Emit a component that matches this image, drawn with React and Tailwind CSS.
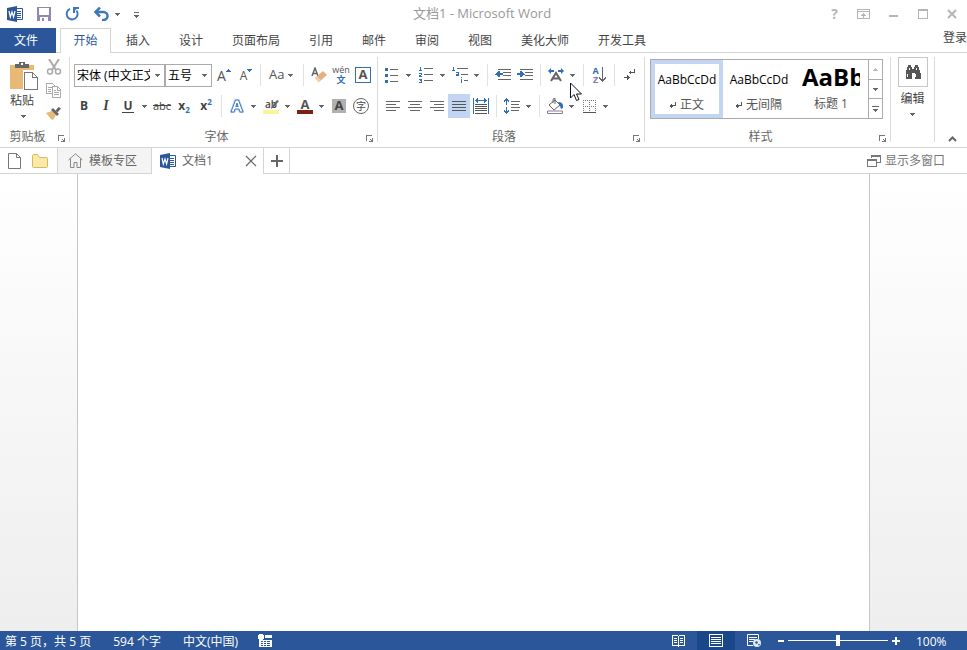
import { useState } from "react";

const TABS = ["插入", "设计", "页面布局", "引用", "邮件", "审阅", "视图", "美化大师", "开发工具"];

function Svg({ w = 16, h = 16, children, crisp = true }) {
  return (
    <svg
      width={w}
      height={h}
      viewBox={`0 0 ${w} ${h}`}
      fill="none"
      className="shrink-0"
      shapeRendering={crisp ? "crispEdges" : "auto"}
      aria-hidden="true"
    >
      {children}
    </svg>
  );
}

function Caret({ color = "#666" }) {
  return (
    <Svg w={5} h={3}>
      <path d="M0 0h5v1H4v1H3v1H2V2H1V1H0z" fill={color} />
    </Svg>
  );
}

function Tool({ label, active, children }) {
  return (
    <button
      type="button"
      aria-label={label}
      className={`flex w-[22px] shrink-0 items-center justify-center self-stretch ${active ? "bg-[#c2d5f2]" : ""}`}
    >
      {children}
    </button>
  );
}

function SplitTool({ label, children }) {
  return (
    <button type="button" aria-label={label} className="flex h-6 shrink-0 items-center">
      <span className="flex w-[22px] items-center justify-center">{children}</span>
      <span className="flex w-3 justify-center pr-0.5">
        <Caret />
      </span>
    </button>
  );
}

function Sep() {
  return <span className="mx-1 h-[22px] w-px shrink-0 bg-[#e1e1e1]" />;
}

function Group({ title, className = "", children }) {
  return (
    <section aria-label={title} className={`flex shrink-0 flex-col border-r border-[#dadada] ${className}`}>
      {children}
      <div className="mt-auto -mb-px flex h-3 items-end">
        <span className="flex-1 text-center leading-3 text-[#666]">{title}</span>
        <button type="button" aria-label={`${title}设置`} className="flex w-3.5 justify-center">
          <Svg w={8} h={8}>
            <path d="M0 6V0h6v1H1v5zM7 3v4H3V6h2V5H4V4h1v1h1V3z" fill="#777" />
          </Svg>
        </button>
      </div>
    </section>
  );
}

function WordIcon() {
  return (
    <Svg w={16} h={16} crisp={false}>
      <path d="M9 2.5h6.5v11H9" fill="#fff" stroke="#2b579a" />
      <path d="M10 5.500h4M10 7.500h4M10 9.500h4M10 11.500h4" stroke="#2b579a" />
      <path d="M0 2l10-2v16L0 14z" fill="#2b579a" />
      <path d="M2 5l1.3 6L5 6l1.6 5L8 5" stroke="#fff" strokeWidth="1.2" />
    </Svg>
  );
}

// rows: [x, y, width] of each stroke in a paragraph glyph
function Lines({ rows, color = "#666" }) {
  return rows.map(([x, y, w]) => <rect key={`${x}-${y}`} x={x} y={y} width={w} height="1" fill={color} />);
}

function TitleBar() {
  return (
    <header className="flex h-7 items-center pl-[7px] text-[#999]">
      <div className="flex flex-1 items-center">
        <WordIcon />
        <button type="button" aria-label="保存" className="ml-3.5">
          <Svg w={14} h={14}>
            <path d="M0 0h14v14H0z" fill="#9186b4" />
            <path d="M2 1h10v7H2zM3 10h8v4H3z" fill="#fff" />
            <path d="M5 11h2v3H5z" fill="#9186b4" />
          </Svg>
        </button>
        <button type="button" aria-label="重复" className="ml-3.5">
          <Svg w={15} h={14} crisp={false}>
            <path d="M5 1.8A5.5 5.5 0 1 0 11.5 3.5" stroke="#3f78b8" strokeWidth="2" />
            <path d="M8 0h6v2h-2.500L10 3.500V6H8z" fill="#3f78b8" />
          </Svg>
        </button>
        <button type="button" aria-label="撤消" className="ml-3.5 flex items-center gap-1.5">
          <Svg w={15} h={14} crisp={false}>
            <path d="M2 5h7.500a4 4 0 0 1 0 8H8" stroke="#3f78b8" strokeWidth="2.500" />
            <path d="M6 .5L1.500 5 6 9.500" stroke="#3f78b8" strokeWidth="2.500" />
          </Svg>
          <Caret />
        </button>
        <button type="button" aria-label="自定义快速访问工具栏" className="ml-3.5 pt-0.5">
          <Svg w={5} h={6}>
            <path d="M0 0h5v1H0zM0 3h5v1H4v1H3v1H2V5H1V4H0z" fill="#666" />
          </Svg>
        </button>
      </div>
      <h1 className="text-[13px] font-normal">文档1 - Microsoft Word</h1>
      <div className="flex flex-1 items-center justify-end gap-[19px] pr-2.5">
        <button type="button" aria-label="帮助" className="text-sm leading-4 font-bold text-[#b5b5b5]">
          ?
        </button>
        <button type="button" aria-label="功能区显示选项">
          <Svg w={13} h={10}>
            <path d="M.5.5h12v9H.5zM0 2.500h13M6.500 4v5M4 6.500h5M5 5.500h3" stroke="#b5b5b5" />
          </Svg>
        </button>
        <button type="button" aria-label="最小化">
          <Svg w={10} h={10}>
            <path d="M0 6h9v2H0z" fill="#b5b5b5" />
          </Svg>
        </button>
        <button type="button" aria-label="最大化">
          <Svg w={10} h={10}>
            <path d="M.5.5h9v9H.5zM0 1.500h10" stroke="#b5b5b5" />
          </Svg>
        </button>
        <button type="button" aria-label="关闭">
          <Svg w={10} h={10} crisp={false}>
            <path d="M1 1l8 8M9 1L1 9" stroke="#b5b5b5" strokeWidth="2" />
          </Svg>
        </button>
      </div>
    </header>
  );
}

function RibbonTabs() {
  return (
    <nav className="flex h-[25px] text-[#444]">
      <button type="button" className="w-14 bg-[#2b579a] pr-1 text-white">
        文件
      </button>
      <span className="w-1 border-b border-[#d4d4d4]" />
      <button type="button" aria-current="page" className="w-[51px] border border-b-0 border-[#d4d4d4] text-[#2b579a]">
        开始
      </button>
      {TABS.map((tab) => (
        <button
          key={tab}
          type="button"
          className={`border-b border-[#d4d4d4] pt-px pl-px ${tab.length > 2 ? "w-[77px]" : "w-[53px]"}`}
        >
          {tab}
        </button>
      ))}
      <button type="button" className="flex-1 border-b border-[#d4d4d4] pb-1 text-right">
        登录
      </button>
    </nav>
  );
}

function ClipboardGroup() {
  return (
    <Group title="剪贴板" className="w-[70px]">
      <div className="flex pl-2.5">
        <button type="button" className="flex w-7 flex-col items-start pt-1 text-[#444]">
          <Svg w={28} h={30}>
            <path d="M0 4h24v24H0z" fill="#e8b877" />
            <path d="M5 3h4V1h6v2h4v4H5z" fill="#666" />
            <path d="M11 2h2v2h-2z" fill="#fff" />
            <path d="M13 9h15v21H13z" fill="#fff" />
            <path d="M14.500 11.500h8l5 5v12h-13zM22.500 11.500v5h5" fill="#fff" stroke="#777" />
          </Svg>
          <span className="leading-5">粘贴</span>
          <span className="flex w-[26px] justify-center pt-1">
            <Caret />
          </span>
        </button>
        <div className="flex flex-col gap-2 pt-0.5 pl-2">
          <button type="button" aria-label="剪切">
            <Svg w={16} h={16} crisp={false}>
              <path d="M3 0l7 11M13 0L6 11" stroke="#aaa" strokeWidth="2" />
              <circle cx="4" cy="12.500" r="2.500" stroke="#aaa" strokeWidth="1.500" />
              <circle cx="12" cy="12.500" r="2.500" stroke="#aaa" strokeWidth="1.500" />
            </Svg>
          </button>
          <button type="button" aria-label="复制">
            <Svg w={16} h={15}>
              <path d="M.5.5h6l2 2v8h-8zM2 4.500h4M2 6.500h3M2 8.500h3" stroke="#aaa" />
              <path d="M6.500 3.500h5l3 3v8h-8z" fill="#fff" stroke="#aaa" />
              <path d="M11.500 4v3H15M8 7.500h2M8 9.500h5M8 11.500h5" stroke="#aaa" />
            </Svg>
          </button>
          <button type="button" aria-label="格式刷">
            <Svg w={16} h={14} crisp={false}>
              <path d="M0 7l6-2 4 4-3 5-2-1z" fill="#e8b877" />
              <path d="M5 4l2-2 6 6-2 2z" fill="#666" />
              <path d="M9.500 4.500l3-3.500L15 2.500 11.500 6.500z" fill="#666" />
            </Svg>
          </button>
        </div>
      </div>
    </Group>
  );
}

function Combo({ label, value, className }) {
  return (
    <label className={`relative block h-[23px] shrink-0 ${className}`}>
      <select
        aria-label={label}
        defaultValue={value}
        className="h-full w-full appearance-none overflow-hidden border border-[#ababab] bg-white pt-0.5 pr-3.5 pl-0.5 text-xs text-black"
      >
        <option>{value}</option>
      </select>
      <span className="pointer-events-none absolute top-2.5 right-[5px]">
        <Caret />
      </span>
    </label>
  );
}

function FontGroup() {
  return (
    <Group title="字体" className="w-[308px]">
      <div className="mt-1.5 flex h-6 items-center pl-1 text-[#555]">
        <Combo label="字体" value="宋体 (中文正文)" className="w-[91px]" />
        <Combo label="字号" value="五号" className="w-[47px]" />
        <Tool label="增大字号">
          <span className="pt-0.5 pl-0.5 text-sm leading-4 font-medium">A</span>
          <span className="self-start pt-1.5">
            <Svg w={5} h={3}>
              <path d="M2 0h1v1h1v1h1v1H0V2h1V1h1z" fill="#2f6fb5" />
            </Svg>
          </span>
        </Tool>
        <Tool label="减小字号">
          <span className="pt-0.5 pl-0.5 text-xs leading-4 font-medium">A</span>
          <span className="self-start pt-1.5">
            <Caret color="#2f6fb5" />
          </span>
        </Tool>
        <Sep />
        <button type="button" aria-label="更改大小写" className="flex h-6 w-[34px] items-center gap-1 pl-1">
          <span className="text-[13px] font-medium">Aa</span>
          <Caret />
        </button>
        <Sep />
        <Tool label="清除格式">
          <Svg w={16} h={16} crisp={false}>
            <path d="M1 9l3-8 3 8M2 6.500h4" stroke="#666" strokeWidth="1.500" />
            <path d="M4 11l8-7 4 4-8 7z" fill="#e3b083" />
            <path d="M4 11l2-1.800 4 4L8 15H7z" fill="#f0cfae" />
          </Svg>
        </Tool>
        <Tool label="拼音指南">
          <span className="flex flex-col items-center">
            <span className="h-[9px] text-[9px] leading-[7px] font-medium">wén</span>
            <span className="h-[9px] font-['Noto_Sans_CJK_SC',sans-serif] text-[9px] leading-[9px] font-bold text-[#2f6fb5]">
              文
            </span>
          </span>
        </Tool>
        <Tool label="字符边框">
          <span className="flex size-4 items-center justify-center border border-[#2f6fb5] text-[13px] font-bold">A</span>
        </Tool>
      </div>
      <div className="mt-[7px] flex h-6 items-center pl-[3px] text-[#444]">
        <Tool label="加粗">
          <b>B</b>
        </Tool>
        <Tool label="倾斜">
          <i className="font-['Liberation_Serif',serif] text-sm font-bold">I</i>
        </Tool>
        <SplitTool label="下划线">
          <span className="border-b border-[#444] px-px leading-3 font-bold">U</span>
        </SplitTool>
        <Tool label="删除线">
          <span className="text-[11px] font-medium line-through">abc</span>
        </Tool>
        <Tool label="下标">
          <b>x</b>
          <span className="pt-2 text-[8px] leading-3 font-bold text-[#2f6fb5]">2</span>
        </Tool>
        <Tool label="上标">
          <b>x</b>
          <span className="pb-2 text-[8px] leading-3 font-bold text-[#2f6fb5]">2</span>
        </Tool>
        <Sep />
        <SplitTool label="文本效果">
          <Svg w={14} h={14} crisp={false}>
            <path d="M1 13L5.500 1h3L13 13h-3l-1-3H5l-1 3zM5.800 7.500h2.400L7 4z" stroke="#c2d5f2" strokeWidth="2.500" />
            <path d="M1 13L5.500 1h3L13 13h-3l-1-3H5l-1 3zM5.800 7.500h2.400L7 4z" fill="#fff" stroke="#3f78b8" />
          </Svg>
        </SplitTool>
        <SplitTool label="突出显示">
          <span className="relative flex flex-col">
            <span className="text-[10px] leading-[11px] font-semibold">ab</span>
            <span className="h-1 w-4 bg-[#fdf39a]" />
            <span className="absolute top-0 right-0">
              <Svg w={9} h={11} crisp={false}>
                <path d="M1 10l1-3 5-6 2 1-5 6z" fill="#666" />
              </Svg>
            </span>
          </span>
        </SplitTool>
        <SplitTool label="字体颜色">
          <span className="flex flex-col items-center">
            <span className="text-[13px] leading-[11px] font-bold text-[#555]">A</span>
            <span className="h-1 w-4 bg-[#7b2111]" />
          </span>
        </SplitTool>
        <Tool label="字符底纹">
          <span className="flex size-3.5 items-center justify-center bg-[#b1b1b1] text-[13px] font-bold">A</span>
        </Tool>
        <Tool label="带圈字符">
          <span className="flex size-4 shrink-0 items-center justify-center rounded-full border border-[#666] text-[10px] leading-none">
            字
          </span>
        </Tool>
      </div>
    </Group>
  );
}

function ParagraphGroup() {
  return (
    <Group title="段落" className="w-[267px]">
      <div className="mt-1.5 flex h-6 items-center pl-[3px]">
        <SplitTool label="项目符号">
          <Svg w={14} h={15}>
            <path d="M0 0h3v3H0zM0 6h3v3H0zM0 12h3v3H0z" fill="#2f6fb5" />
            <Lines rows={[[5, 1, 8], [5, 7, 8], [5, 13, 8]]} />
          </Svg>
        </SplitTool>
        <SplitTool label="编号">
          <Svg w={14} h={16}>
            <path d="M1 0h1v3h1v1H0V3h1V1H0zM0 6h3v2H2v1h1v1H0V8h2V7H0zM0 12h3v4H0v-1h2v-1H1v-1H0z" fill="#2f6fb5" />
            <Lines rows={[[5, 1, 9], [5, 7, 9], [5, 13, 9]]} />
          </Svg>
        </SplitTool>
        <SplitTool label="多级列表">
          <Svg w={16} h={16}>
            <path d="M1 0h1v3h1v1H0V3h1V1H0zM4 5h3v4H4V7h2V6H4zM9 10h1v1H9zM9 12h1v4H9z" fill="#2f6fb5" />
            <Lines rows={[[5, 1, 11], [9, 7, 7], [12, 13, 4]]} />
          </Svg>
        </SplitTool>
        <Sep />
        <Tool label="减少缩进">
          <Svg w={16} h={12}>
            <Lines rows={[[3, 0, 13], [8, 3, 8], [8, 6, 8], [3, 10, 13]]} />
            <path d="M0 5h1V4h1V3h1V2h2v2h3v2H5v2H3V7H2V6H0z" fill="#2f6fb5" />
          </Svg>
        </Tool>
        <Tool label="增加缩进">
          <Svg w={16} h={12}>
            <Lines rows={[[3, 0, 13], [8, 3, 8], [8, 6, 8], [3, 10, 13]]} />
            <path d="M8 5H7V4H6V3H5V2H3v2H0v2h3v2h2V7h1V6h2z" fill="#2f6fb5" />
          </Svg>
        </Tool>
        <Sep />
        <SplitTool label="中文版式">
          <Svg w={16} h={14} crisp={false}>
            <path d="M3 13l5-8 5 8M5 10.500h6" stroke="#666" strokeWidth="2" />
            <path d="M0 3l3-3v2h3v2H3v2zM16 3l-3-3v2h-3v2h3v2z" fill="#2f6fb5" />
          </Svg>
        </SplitTool>
        <Sep />
        <Tool label="排序">
          <span className="flex flex-col text-[9px] leading-[9px] font-bold">
            <span className="h-[9px] text-[#2f6fb5]">A</span>
            <span className="h-[9px] text-[#8a78ad]">Z</span>
          </span>
          <Svg w={7} h={16}>
            <path d="M3 0h1v12h1v-1h1v-1h1v2H6v1H5v1H4v1H3v-1H2v-1H1v-1H0v-2h1v1h1v1h1z" fill="#666" />
          </Svg>
        </Tool>
        <Sep />
        <Tool label="显示编辑标记">
          <Svg w={12} h={12}>
            <path d="M10 0h1v4H7v1H6V4H5V3h1V2h1v1h3zM0 8h3V6h1v1h1v1h1v1H5v1H4v1H3V9H0z" fill="#555" />
          </Svg>
        </Tool>
      </div>
      <div className="mt-[7px] flex h-6 items-center pl-1">
        <Tool label="左对齐">
          <Svg w={14} h={10}>
            <Lines rows={[[0, 0, 14], [0, 3, 10], [0, 6, 14], [0, 9, 10]]} />
          </Svg>
        </Tool>
        <Tool label="居中">
          <Svg w={14} h={10}>
            <Lines rows={[[0, 0, 14], [2, 3, 10], [0, 6, 14], [2, 9, 10]]} />
          </Svg>
        </Tool>
        <Tool label="右对齐">
          <Svg w={14} h={10}>
            <Lines rows={[[0, 0, 14], [4, 3, 10], [0, 6, 14], [4, 9, 10]]} />
          </Svg>
        </Tool>
        <Tool label="两端对齐" active>
          <Svg w={14} h={10}>
            <Lines rows={[[0, 0, 14], [0, 3, 14], [0, 6, 14], [0, 9, 14]]} color="#555" />
          </Svg>
        </Tool>
        <Tool label="分散对齐">
          <Svg w={16} h={16}>
            <path d="M0 0h1v16H0zM15 0h1v16h-1zM2 2h1V1h1V0h1v2h6V0h1v1h1v1h1v1h-1v1h-1v1h-1V3H5v2H4V4H3V3H2z" fill="#2f6fb5" />
            <Lines rows={[[2, 6, 12], [2, 8, 12], [2, 10, 12], [2, 12, 12], [2, 15, 12]]} color="#555" />
          </Svg>
        </Tool>
        <Sep />
        <SplitTool label="行距">
          <Svg w={16} h={16}>
            <path d="M2 0h1v1h1v1h1v2H4V3H3v4H2V3H1v1H0V2h1V1h1zM2 16h1v-1h1v-1h1v-2H4v1H3V9H2v4H1v-1H0v2h1v1h1z" fill="#2f6fb5" />
            <Lines rows={[[7, 3, 9], [7, 6, 8], [7, 9, 9], [7, 12, 8]]} />
          </Svg>
        </SplitTool>
        <Sep />
        <SplitTool label="底纹">
          <Svg w={16} h={16} crisp={false}>
            <path d="M2 7l6-5 5 5-6 5z" fill="#fff" stroke="#666" />
            <path d="M6 5V2q0-2 2-1.500V6" stroke="#666" />
            <path d="M11 4q5 0 5 4v2l-2 1-1-3z" fill="#2f6fb5" />
            <path d="M.5 13h15v2.500H.5z" fill="#fff" stroke="#8b7ba0" />
          </Svg>
        </SplitTool>
        <SplitTool label="边框">
          <Svg w={13} h={13}>
            <path d="M0 .5h13M0 6.500h13M.5 0v12M6.500 0v12M12.500 0v12" stroke="#777" strokeDasharray="1 1" />
            <path d="M0 12.500h13" stroke="#555" />
          </Svg>
        </SplitTool>
      </div>
    </Group>
  );
}

function StyleCard({ name, mark, selected, heading, onClick }) {
  return (
    <button
      type="button"
      onClick={onClick}
      className={`flex h-[58px] w-[72px] shrink-0 flex-col items-center overflow-hidden border-4 ${selected ? "border-[#c2d5f2]" : "border-transparent"}`}
    >
      {heading ? (
        <span className="w-[58px] overflow-hidden text-left text-2xl leading-[26px] font-bold whitespace-nowrap text-black">
          AaBb
        </span>
      ) : (
        <span className="leading-[31px] text-black">AaBbCcDd</span>
      )}
      <span className="mt-auto flex items-center gap-1 leading-5 text-[#555]">
        {mark && (
          <Svg w={6} h={6}>
            <path d="M5 0h1v4H3v1H2v1H1V5H0V3h1V2h1v1h3z" fill="#555" />
          </Svg>
        )}
        {name}
      </span>
    </button>
  );
}

function StylesGroup() {
  const [picked, setPicked] = useState("正文");
  return (
    <Group title="样式" className="w-[246px]">
      <div className="mt-0.5 ml-[5px] flex h-[60px] w-[233px] border border-[#ababab]">
        <StyleCard name="正文" mark selected={picked === "正文"} onClick={() => setPicked("正文")} />
        <StyleCard name="无间隔" mark selected={picked === "无间隔"} onClick={() => setPicked("无间隔")} />
        <StyleCard name="标题 1" heading selected={picked === "标题 1"} onClick={() => setPicked("标题 1")} />
        <div className="ml-auto flex w-3.5 flex-col divide-y divide-[#ababab] border-l border-[#ababab]">
          <button type="button" aria-label="上一行" className="flex flex-1 items-center justify-center">
            <Svg w={5} h={3}>
              <path d="M2 0h1v1h1v1h1v1H0V2h1V1h1z" fill="#bbb" />
            </Svg>
          </button>
          <button type="button" aria-label="下一行" className="flex flex-1 items-center justify-center">
            <Caret />
          </button>
          <button type="button" aria-label="其他样式" className="flex flex-1 items-center justify-center">
            <Svg w={7} h={6}>
              <path d="M0 0h7v1H0zM1 3h5v1H5v1H4v1H3V5H2V4H1z" fill="#666" />
            </Svg>
          </button>
        </div>
      </div>
    </Group>
  );
}

function Ribbon() {
  return (
    <div className="flex h-[95px] shrink-0 border-b border-[#d4d4d4] pt-1 pb-[5px]">
      <ClipboardGroup />
      <FontGroup />
      <ParagraphGroup />
      <StylesGroup />
      <div className="flex w-11 shrink-0 flex-col items-center border-r border-[#dadada]">
        <button type="button" className="flex flex-col items-center text-[#444]">
          <span className="flex h-[30px] w-[30px] items-center justify-center border border-[#c6c6c6]">
            <Svg w={16} h={14}>
              <path d="M3 0h3v2h1v2h2V2h1V0h3v2h1v3h1v3h1v6h-6V8H7v6H1V8h0V5h1V2h1z" fill="#555" />
              <path d="M2 9h1v3H2zM10 9h1v3h-1zM4 3h1v2H4zM11 3h1v2h-1z" fill="#fff" />
            </Svg>
          </span>
          <span className="mt-0.5 leading-5">编辑</span>
          <span className="pt-1">
            <Caret />
          </span>
        </button>
      </div>
      <button type="button" aria-label="折叠功能区" className="ml-auto self-end pr-2.5">
        <Svg w={9} h={6} crisp={false}>
          <path d="M1 5l3.500-3.500L8 5" stroke="#666" strokeWidth="2" />
        </Svg>
      </button>
    </div>
  );
}

function DocumentTabs() {
  return (
    <div className="flex h-[26px] shrink-0 text-[#666]">
      <div className="flex w-[58px] items-center gap-2.5 border-r border-b border-[#d4d4d4] pl-2">
        <button type="button" aria-label="新建">
          <Svg w={14} h={16} crisp={false}>
            <path d="M.5.5h8l4 4v11H.5zM8.500.5v4h4" fill="#fff" stroke="#777" />
          </Svg>
        </button>
        <button type="button" aria-label="打开">
          <Svg w={16} h={14} crisp={false}>
            <path d="M.5 12.500v-11q0-1 1-1h4l2 3h7q1 0 1 1v8q0 1-1 1h-13q-1 0-1-1z" fill="#fbe9a9" stroke="#d9b860" />
          </Svg>
        </button>
      </div>
      <button type="button" className="flex w-[94px] items-center gap-1.5 border-r border-b border-[#d4d4d4] bg-[#f4f4f4] pl-2.5">
        <Svg w={15} h={15} crisp={false}>
          <path d="M.5 7L7.500.8 14.500 7M2.500 5.500v9h3.500v-5h3v5h3.500v-9" stroke="#888" />
        </Svg>
        模板专区
      </button>
      <div className="flex w-28 items-center border-r border-[#d4d4d4] pl-2">
        <button type="button" className="flex flex-1 items-center gap-1.5">
          <WordIcon />
          文档1
        </button>
        <button type="button" aria-label="关闭文档" className="pr-1.5">
          <Svg w={12} h={12} crisp={false}>
            <path d="M1 1l10 10M11 1L1 11" stroke="#666" strokeWidth="1.200" />
          </Svg>
        </button>
      </div>
      <button type="button" aria-label="新建标签" className="flex w-[26px] items-center justify-center border-r border-b border-[#d4d4d4]">
        <Svg w={12} h={12}>
          <path d="M5 0h2v5h5v2H7v5H5V7H0V5h5z" fill="#666" />
        </Svg>
      </button>
      <div className="flex flex-1 items-center justify-end border-b border-[#d4d4d4] pr-[22px]">
        <button type="button" className="flex items-center gap-1 text-[#777]">
          <Svg w={14} h={12}>
            <path d="M4.500 3V.5h9v7H10M4 1.500h10M.5 4.500h9v7h-9zM0 5.500h10" stroke="#777" />
          </Svg>
          显示多窗口
        </button>
      </div>
    </div>
  );
}

function StatusBar() {
  return (
    <footer className="flex h-[19px] shrink-0 items-center bg-[#2b579a] pl-[5px] text-white">
      <div className="flex items-center gap-[22px] pt-0.5">
        <span>第 5 页，共 5 页</span>
        <span>594 个字</span>
        <span>中文(中国)</span>
      </div>
      <button type="button" aria-label="宏录制" className="ml-5">
        <Svg w={14} h={13}>
          <path d="M7 1h7v3H7zM1 6h13v7H1z" fill="#fff" />
          <path d="M3 7h2v1H3zM6 7h2v1H6zM9 7h3v1H9zM3 9h2v1H3zM6 9h2v1H6zM9 9h3v1H9zM3 11h2v1H3zM6 11h2v1H6zM9 11h3v1H9z" fill="#2b579a" />
          <path d="M1 0h4v1h1v4H5v1H1V5H0V1h1z" fill="#fff" />
        </Svg>
      </button>
      <div className="ml-auto flex items-center self-stretch">
        <button type="button" aria-label="阅读视图" className="flex w-[38px] justify-center">
          <Svg w={13} h={12}>
            <path d="M.5.5h5l1 1 1-1h5v10h-5l-1 1-1-1h-5zM6.500 1v11M2 3.500h3M2 5.500h3M2 7.500h3M8 3.500h3M8 5.500h3M8 7.500h3" stroke="#fff" />
          </Svg>
        </button>
        <button type="button" aria-label="页面视图" aria-pressed="true" className="flex w-[38px] items-center justify-center self-stretch bg-[#19478a]">
          <Svg w={14} h={13}>
            <path d="M.5.5h13v12H.5zM2 3.500h10M2 5.500h10M2 7.500h10M2 9.500h10" stroke="#fff" />
          </Svg>
        </button>
        <button type="button" aria-label="Web 版式视图" className="flex w-[38px] justify-center">
          <Svg w={14} h={13} crisp={false}>
            <path d="M6 11.500H.5V.5h11V5M2 3.500h8M2 5.500h6M2 7.500h4" stroke="#fff" />
            <circle cx="10" cy="9" r="4" fill="#dfe8f5" />
            <path d="M8 8l2-1 1 2-2 1zM11 10l2 0-1 2z" fill="#2b579a" />
          </Svg>
        </button>
        <button type="button" aria-label="缩小" className="ml-[5px]">
          <Svg w={6} h={2}>
            <path d="M0 0h6v2H0z" fill="#fff" />
          </Svg>
        </button>
        <input
          type="range"
          aria-label="缩放"
          min="0"
          max="200"
          defaultValue="100"
          className="mx-1 h-[11px] w-[100px] appearance-none bg-transparent bg-[linear-gradient(#fff,#fff)] bg-[length:100%_1px] bg-center bg-no-repeat [&::-webkit-slider-thumb]:h-[11px] [&::-webkit-slider-thumb]:w-1 [&::-webkit-slider-thumb]:appearance-none [&::-webkit-slider-thumb]:bg-white"
        />
        <button type="button" aria-label="放大">
          <Svg w={8} h={8}>
            <path d="M3 0h2v3h3v2H5v3H3V5H0V3h3z" fill="#fff" />
          </Svg>
        </button>
        <span className="w-[67px] pt-0.5 pl-4">100%</span>
      </div>
    </footer>
  );
}

export default function App() {
  return (
    <div className="relative flex min-h-screen flex-col overflow-hidden bg-white font-['Open_Sans','Noto_Sans_CJK_SC',sans-serif] text-xs">
      <TitleBar />
      <RibbonTabs />
      <Ribbon />
      <DocumentTabs />
      <main className="flex flex-1 bg-linear-to-b from-white to-[#eee] pr-[97px] pl-[77px]">
        <div
          role="textbox"
          aria-label="文档正文"
          contentEditable
          suppressContentEditableWarning
          className="flex-1 border-x border-[#c6c6c6] bg-white outline-none"
        />
      </main>
      <StatusBar />
      <span className="pointer-events-none absolute top-[82px] left-[570px]">
        <Svg w={13} h={20} crisp={false}>
          <path d="M.5 1v15l3.500-3.500 2.500 6 2.500-1-2.500-5.500h5z" fill="#fff" stroke="#112" />
        </Svg>
      </span>
    </div>
  );
}
